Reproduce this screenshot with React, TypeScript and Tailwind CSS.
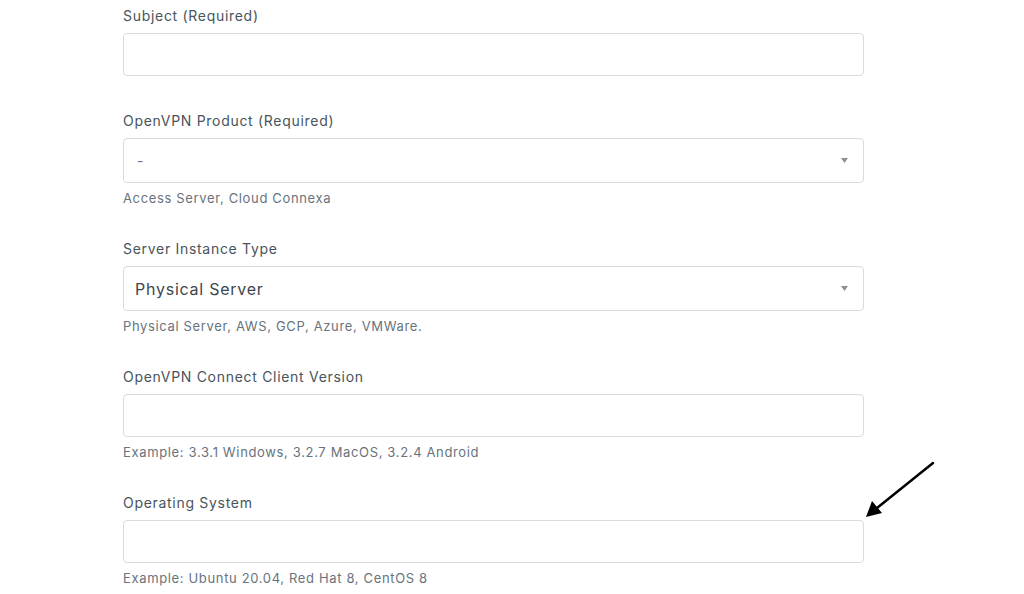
import React from "react";

type Field = {
  label: string;
  kind: "input" | "select";
  value?: string;
  placeholder?: boolean;
  hint?: string;
};

const FIELDS: Field[] = [
  { label: "Subject (Required)", kind: "input" },
  { label: "OpenVPN Product (Required)", kind: "select", value: "-", placeholder: true, hint: "Access Server, Cloud Connexa" },
  { label: "Server Instance Type", kind: "select", value: "Physical Server", hint: "Physical Server, AWS, GCP, Azure, VMWare." },
  { label: "OpenVPN Connect Client Version", kind: "input", hint: "Example: 3.3.1 Windows, 3.2.7 MacOS, 3.2.4 Android" },
  { label: "Operating System", kind: "input", hint: "Example: Ubuntu 20.04, Red Hat 8, CentOS 8" },
];

function Caret() {
  return (
    <svg width="7" height="5" viewBox="0 0 7 5" className="absolute right-[15px] top-1/2 -translate-y-[3px]">
      <path d="M0 0h7L3.5 5z" fill="#8c9196" />
    </svg>
  );
}

function FormField({ field }: { field: Field }) {
  return (
    <div className={field.hint ? "mb-[32px]" : "mb-[35px]"}>
      <label className="block text-[14px] leading-5 tracking-[0.7px] text-[#49545c]">{field.label}</label>
      {field.kind === "input" ? (
        <div className="mt-[7px] h-[43px] rounded border border-[#d8dcde] bg-white" />
      ) : (
        <div className="relative mt-[7px] flex h-[45px] items-center rounded border border-[#d8dcde] bg-white px-[11px]">
          <span
            className={
              field.placeholder
                ? "pl-[2px] text-[14px] text-[#68737d]"
                : "text-[16px] tracking-[0.75px] text-[#3d464d]"
            }
          >
            {field.value}
          </span>
          <Caret />
        </div>
      )}
      {field.hint && (
        <p className="mt-[6px] text-[13px] leading-[18px] tracking-[0.65px] text-[#68737d]">{field.hint}</p>
      )}
    </div>
  );
}

export default function App() {
  return (
    <div className="relative h-[594px] w-[1024px] overflow-hidden bg-white font-['Inter',sans-serif]">
      <div className="ml-[123px] w-[741px] pt-[6px]">
        {FIELDS.map((f) => (
          <FormField key={f.label} field={f} />
        ))}
      </div>

      {/* annotation arrow */}
      <svg className="absolute left-[860px] top-[458px]" width="80" height="66" viewBox="0 0 80 66">
        <line x1="73" y1="5" x2="17" y2="50" stroke="#000" strokeWidth="2.5" strokeLinecap="round" />
        <path d="M6 59 L12 43 L22 55 Z" fill="#000" />
      </svg>
    </div>
  );
}
